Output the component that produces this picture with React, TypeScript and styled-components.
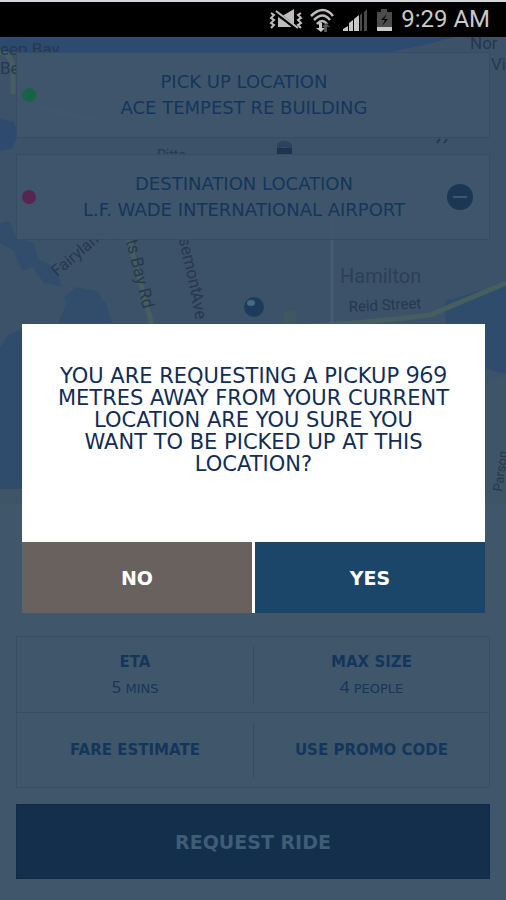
import React from "react";
import styled, { createGlobalStyle } from "styled-components";

const GlobalStyle = createGlobalStyle`
  *, *::before, *::after { box-sizing: border-box; }
  html, body { margin: 0; background: #40566b; }
  body { font-family: "DejaVu Sans", sans-serif; }
  button { font: inherit; cursor: pointer; }
`;

const Screen = styled.div`
  min-height: 100vh;
  display: flex;
  flex-direction: column;
`;

const StatusBar = styled.header`
  height: 37px;
  padding: 0 16px 0 12px;
  border-top: 2px solid #d4d8da;
  background: #000;
  color: #c9c9c9;
  display: flex;
  align-items: center;
  justify-content: flex-end;
  gap: 8px;
`;

const Clock = styled.time`
  font: 24px/35px Roboto, sans-serif;
`;

const StatusIcons = styled.svg`
  width: 124px;
  height: 28px;
  flex: none;
`;

const Stage = styled.div`
  position: relative;
  flex: 1;
  display: flex;
  flex-direction: column;
`;

const MapArea = styled.section`
  position: relative;
  flex: 1;
  min-height: 300px;
  padding: 15px 16px;
  background: #3c5268;
  overflow: hidden;
`;

const MapDrawing = styled.svg`
  position: absolute;
  inset: 0;
  width: 100%;
  height: 100%;
`;

const Stops = styled.div`
  position: relative;
  display: grid;
  gap: 16px;
`;

const StopCard = styled.article`
  min-height: 86px;
  border: 1px solid #354c63;
  background: #3f556bf2;
  color: #15365b;
  display: grid;
  grid-template-columns: 26px 1fr 44px;
  align-items: center;
`;

const Dot = styled.span<{ $color: string }>`
  width: 14px;
  height: 14px;
  margin-left: 5px;
  border-radius: 50%;
  background: ${(p) => p.$color};
`;

const StopText = styled.div`
  text-align: center;
  font-size: 18px;
  line-height: 26px;
  text-transform: uppercase;
`;

const RemoveButton = styled.button`
  width: 26px;
  height: 26px;
  margin-left: 2px;
  padding: 0;
  border: 0;
  border-radius: 50%;
  background: #1b3755;
  display: grid;
  place-items: center;

  &::before {
    content: "";
    width: 14px;
    height: 2px;
    background: #3f566f;
  }
`;

const Panel = styled.section`
  padding: 132px 16px 21px;
  background: #40566b;
  display: grid;
  gap: 16px;
`;

const Options = styled.div`
  border: 1px solid #364e65;
  color: #15365b;
`;

const OptionRow = styled.div`
  display: grid;
  grid-template-columns: 1fr 1fr;
  height: 75px;
  padding: 9px 0;

  & + & {
    border-top: 1px solid #364e65;
  }
`;

const Option = styled.div`
  display: flex;
  flex-direction: column;
  align-items: center;
  justify-content: center;

  & + & {
    border-left: 1px solid #344c64;
  }
`;

const OptionTitle = styled.strong`
  font-size: 15px;
  line-height: 28px;
`;

const OptionValue = styled.span`
  font-size: 13px;
  line-height: 26px;
`;

const OptionButton = styled.button`
  border: 0;
  padding: 0;
  background: none;
  color: inherit;

  & + & {
    border-left: 1px solid #344c64;
  }
`;

const Digits = styled.span<{ $size: number }>`
  font-family: "Noto Sans", sans-serif;
  font-size: ${(p) => p.$size}px;
  line-height: 0;
`;

const RequestButton = styled.button`
  height: 75px;
  border: 1px solid #102b49;
  background: #132f4c;
  color: #3f5c78;

  && {
    font-size: 19px;
    font-weight: bold;
  }
`;

const Scrim = styled.div`
  position: absolute;
  inset: 0;
  padding: 0 21px;
  display: flex;
  align-items: center;
`;

const Dialog = styled.div`
  flex: 1;
  margin-left: 1px;
  background: #fff;
`;

const Message = styled.p`
  margin: 0;
  min-height: 218px;
  padding: 41px 8px;
  color: #112d54;
  text-align: center;
  text-transform: uppercase;
  font-size: 21px;
  line-height: 22px;
`;

const Actions = styled.div`
  display: grid;
  grid-template-columns: 1fr 1fr;
  gap: 3px;
`;

const ActionButton = styled.button<{ $primary?: boolean }>`
  height: 71px;
  border: 0;
  background: ${(p) => (p.$primary ? "#1b466a" : "#69615d")};
  color: #fff;

  && {
    font-size: 19px;
    font-weight: bold;
  }
`;

function DeviceIcons() {
  return (
    <StatusIcons viewBox="0 0 124 28" aria-hidden="true">
      <g fill="none" stroke="#bdbdbd" strokeWidth="2">
        <path d="M2 7l3 2-3 3 3 2-3 3 3 2-3 3M32 7l-3 2 3 3-3 2 3 3-3 2 3 3" />
        <path d="M42 10c8-8 16-8 22 0M45 14c6-6 11-6 16 0M48 18c4-4 7-4 10 0" strokeWidth="2.5" />
      </g>
      <path d="M9 9h6l10-6v17L18 17 9 11zM9 10v11h14z" fill="#bdbdbd" />
      <path d="M7 6l21 17" stroke="#000" strokeWidth="4" />
      <path d="M7 5l22 17" stroke="#bdbdbd" strokeWidth="2" />
      <path d="M50 17h3v5h3l-4 4-5-4h3z" fill="#c9c9c9" />
      <path d="M58 26h-3v-5h-2l4-4 4 4h-3z" fill="#555" />
      <path d="M74 25v-2l5-3v5zM80 25v-8l4-3v11zM85 25V13l5-4v16z" fill="#c9c9c9" />
      <path d="M91 25V9l2-2v18zM95 25V6l3-3v22z" fill="#4a4a4a" />
      <path d="M112 3h6v3h5v16h-15V6h4z" fill="#4c4c4c" />
      <path d="M118 8l-6 6h4l-3 6 6-7h-4z" fill="#000" />
      <path d="M108 21h15v4h-15z" fill="#c9c9c9" />
    </StatusIcons>
  );
}

function CityMap() {
  return (
    <MapDrawing viewBox="0 0 506 467" preserveAspectRatio="xMidYMid slice" aria-hidden="true">
      <g fill="#2d4b6e">
        <path d="M0 0H455L425 8 390 15H0z" />
        <path d="M0 82l14 3 4 13-6 14-12 2z" />
        <path d="M0 186l10-2 6 16 18 6 4 16 12 6 8 10 4 12-18-4-12-16-10 4-8-20-14-8z" opacity=".7" />
        <path d="M58 286l8-18-2-8 12-10 20 4 10 12 6 20z" opacity=".7" />
        <path d="M0 310l8-12 14-6v160H0z" opacity=".85" />
        <path d="M445 264l30-9 31-8v90l-22-6-20-38-18-5z" opacity=".8" />
      </g>
      <path d="M0 452h506v15H0zM486 345l20-7v127h-20z" fill="#3d5566" />
      <g fill="none" stroke="#465e60">
        <path d="M0 15q12 2 13 18v24M40 70l54 13M128 200l24 88" strokeWidth="5" />
        <path d="M290 290q70-3 140-12l76-32" strokeWidth="5" />
        <path d="M332 168v118" stroke="#455d72" strokeWidth="3" />
      </g>
      <path d="M315 172h13v25h-13zM284 274h12v14h-12zM492 464h7v3h-7z" fill="#3c5961" />
      <g fill="#26394e" fontFamily="Roboto, sans-serif" fontSize="17">
        <text x="0" y="18">eep Bay</text>
        <text x="0" y="37">Be</text>
        <text x="470" y="12">Nor</text>
        <text x="491" y="33">Vi</text>
        <text x="157" y="123" fontSize="14">Pitts</text>
        <text transform="translate(57 240) rotate(-40)" fontSize="16">Fairyland</text>
        <text transform="translate(121 184) rotate(76)">Pitts Bay Rd</text>
        <text transform="translate(174 182) rotate(77)">Rosemont</text>
        <text transform="translate(190 256) rotate(78)">Ave</text>
        <text transform="translate(349 275) rotate(-3)" fontSize="15">Reid Street</text>
        <text x="340" y="246" fontSize="20" fill="#2c4055">Hamilton</text>
        <text transform="translate(502 455) rotate(-82)" fontSize="13">Parson</text>
      </g>
      <path d="M437 106l3-4M444 106l3-4" stroke="#26394e" strokeWidth="2" />
      <path d="M277 117v-8q0-5 7-5t8 5v8h-3v-5q-5-4-9 0v5z" fill="#2b445d" />
      <path d="M277 111h15v6h-15z" fill="#1d3350" />
      <circle cx="254" cy="270" r="10" fill="#1d3c5c" />
      <ellipse cx="251" cy="266" rx="4" ry="3" fill="#496a86" />
    </MapDrawing>
  );
}

export default function App() {
  return (
    <Screen>
      <GlobalStyle />
      <StatusBar>
        <DeviceIcons />
        <Clock>9:29 AM</Clock>
      </StatusBar>
      <Stage>
        <MapArea>
          <CityMap />
          <Stops>
            <StopCard>
              <Dot $color="#176348" />
              <StopText>
                <div>Pick up location</div>
                <div>Ace Tempest Re Building</div>
              </StopText>
            </StopCard>
            <StopCard>
              <Dot $color="#56264f" />
              <StopText>
                <div>Destination location</div>
                <div>L.F. Wade International Airport</div>
              </StopText>
              <RemoveButton type="button" aria-label="Remove destination" />
            </StopCard>
          </Stops>
        </MapArea>
        <Panel>
          <Options>
            <OptionRow>
              <Option>
                <OptionTitle>ETA</OptionTitle>
                <OptionValue>
                  <Digits $size={17}>5</Digits> MINS
                </OptionValue>
              </Option>
              <Option>
                <OptionTitle>MAX SIZE</OptionTitle>
                <OptionValue>
                  <Digits $size={17}>4</Digits> PEOPLE
                </OptionValue>
              </Option>
            </OptionRow>
            <OptionRow>
              <OptionButton type="button">
                <OptionTitle>FARE ESTIMATE</OptionTitle>
              </OptionButton>
              <OptionButton type="button">
                <OptionTitle>USE PROMO CODE</OptionTitle>
              </OptionButton>
            </OptionRow>
          </Options>
          <RequestButton type="button">REQUEST RIDE</RequestButton>
        </Panel>
        <Scrim>
          <Dialog role="alertdialog" aria-modal="true" aria-describedby="pickup-message">
            <Message id="pickup-message">
              You are requesting a pickup <Digits $size={24}>969</Digits>
              <br />
              metres away from your current
              <br />
              location are you sure you
              <br />
              want to be picked up at this
              <br />
              location?
            </Message>
            <Actions>
              <ActionButton type="button">NO</ActionButton>
              <ActionButton type="button" $primary>
                YES
              </ActionButton>
            </Actions>
          </Dialog>
        </Scrim>
      </Stage>
    </Screen>
  );
}
